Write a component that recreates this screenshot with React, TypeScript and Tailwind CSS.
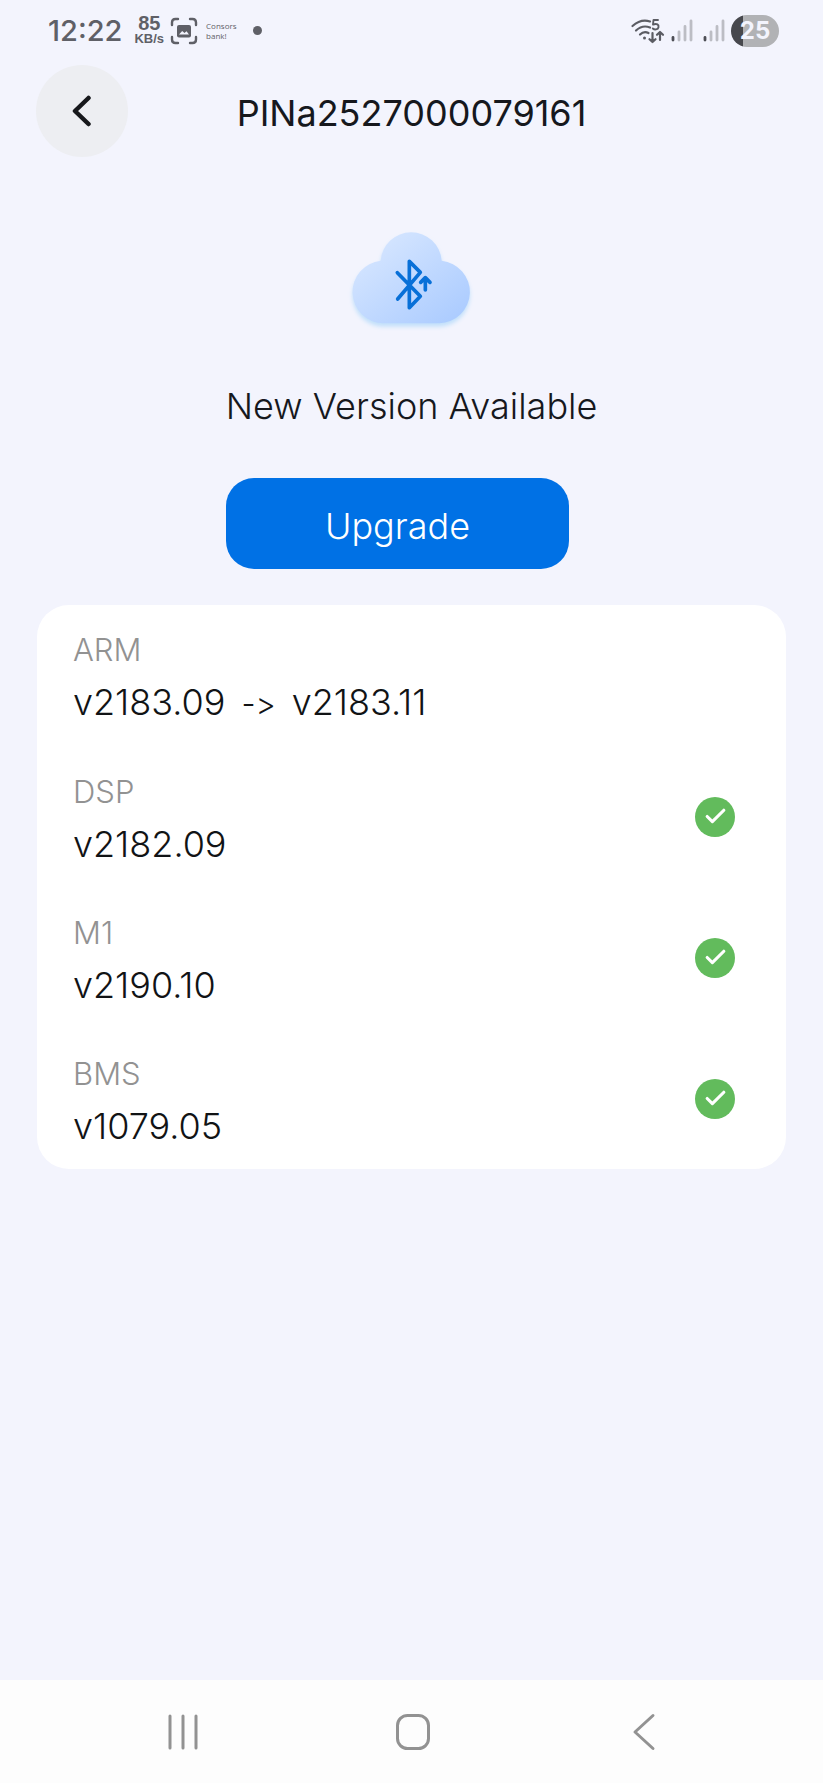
import { Check } from "lucide-react";

type Module = {
  name: string;
  version: string;
  next?: string;
};

const modules: Module[] = [
  { name: "ARM", version: "v2183.09", next: "v2183.11" },
  { name: "DSP", version: "v2182.09" },
  { name: "M1", version: "v2190.10" },
  { name: "BMS", version: "v1079.05" },
];

function SignalBars() {
  return (
    <svg width="22" height="23" viewBox="0 0 22 23" strokeWidth="2.800" strokeLinecap="round" aria-hidden="true">
      <path d="M2 18.5v2.5" stroke="#4d4e55" />
      <path d="M8 13v8M14 7.500v13.500M20 2v19" stroke="#bcbdc4" />
    </svg>
  );
}

function WifiIcon() {
  return (
    <svg width="34" height="26" viewBox="0 0 34 26" fill="none" stroke="#5b5c63" strokeWidth="2.200" strokeLinecap="round" strokeLinejoin="round" aria-hidden="true">
      <path d="M1.500 8Q10 .5 19 3.500" />
      <path d="M5 12.500Q11.500 6.500 19 9.500" />
      <path d="M9 16.500Q13 12.500 17.500 15" />
      <circle cx="13.500" cy="20" r="1.500" fill="#5b5c63" stroke="none" />
      <path d="M27 2h-4.500l-.5 4.500c4-1.500 6 .3 5.500 2.700-.5 2.600-4 2.800-5.700 1.300" strokeWidth="1.900" />
      <path d="M21.500 15v9M18.500 21.200l3 2.800 3-2.800M29 22v-8M26 16.800l3-2.800 3 2.800" />
    </svg>
  );
}

function ScanIcon() {
  return (
    <svg width="28" height="28" viewBox="0 0 28 28" fill="none" aria-hidden="true">
      <path
        d="M2 8V5.500Q2 2 5.500 2H8M20 2h2.500Q26 2 26 5.500V8M26 20v2.500q0 3.500-3.500 3.500H20M8 26H5.500Q2 26 2 22.500V20"
        stroke="#5f6067"
        strokeWidth="2.400"
        strokeLinecap="round"
      />
      <rect x="7" y="8" width="14" height="12.500" rx="2" fill="#5f6067" />
      <path d="M9 17.500l3.200-3.500 2.300 2 2-1.800 2.500 3.300z" fill="#f3f4fd" />
    </svg>
  );
}

function StatusBar() {
  return (
    <div className="flex h-[65px] items-center justify-between pr-11 pb-1 pl-12 text-[#5f6067]">
      <div className="flex items-center">
        <span className="font-['Inter','Liberation_Sans',sans-serif] text-[29px] leading-8 font-medium">12:22</span>
        <div className="ml-3 flex flex-col items-center font-['Liberation_Sans',sans-serif] font-bold">
          <span className="text-[20px] leading-4">85</span>
          <span className="text-[13px] leading-4">KB/s</span>
        </div>
        <span className="ml-1.5">
          <ScanIcon />
        </span>
        <span className="ml-2 flex flex-col font-['Open_Sans',sans-serif] text-[8px] leading-[10px]">
          <span>Consors</span>
          <span>bank!</span>
        </span>
        <span className="ml-4 size-[9px] rounded-full bg-[#5f6067]" />
      </div>
      <div className="flex items-center gap-1.5">
        <WifiIcon />
        <SignalBars />
        <span className="ml-1">
          <SignalBars />
        </span>
        <span className="flex h-8 w-12 items-center justify-center rounded-full bg-linear-to-r from-[#47484d] from-25% to-[#b1b2b5] to-25% font-['Inter',sans-serif] text-[24px] font-bold text-[#f3f4fd]">
          25
        </span>
      </div>
    </div>
  );
}

function CloudIcon() {
  return (
    <svg width="180" height="140" viewBox="6 0 540 420" fill="none" aria-hidden="true">
      <defs>
        <linearGradient id="cloud" x1="170" y1="80" x2="380" y2="350" gradientUnits="userSpaceOnUse">
          <stop stopColor="#d6e6ff" />
          <stop offset="1" stopColor="#acccff" />
        </linearGradient>
        <filter id="shadow" x="60" y="40" width="430" height="350" filterUnits="userSpaceOnUse">
          <feDropShadow dx="0" dy="10" stdDeviation="7" floodColor="#b4dafa" floodOpacity="0.8" />
        </filter>
      </defs>
      <path
        d="M190 340a94 94 0 0 1-8-187.500a91.700 91.700 0 0 1 183 0A94 94 0 0 1 358 340z"
        fill="url(#cloud)"
        filter="url(#shadow)"
      />
      <g stroke="#0870d8" strokeWidth="11" strokeLinecap="round" strokeLinejoin="round">
        <path d="M232 188L301 259L268 293V154L301 187L233 267" />
        <path d="M316 240V203M302 217l14-14 14 14" />
      </g>
    </svg>
  );
}

function ModuleRow({ name, version, next }: Module) {
  return (
    <li className="flex h-[141px] items-center justify-between pr-[51px] pl-9">
      <div className="pt-1.5">
        <p className="text-[31px] leading-[48px] font-light text-[#929292]">{name}</p>
        <p className="flex items-baseline gap-4 text-[36px] leading-[56px] font-light text-[#111315]">
          <span>{version}</span>
          {next && (
            <>
              <span className="text-[31px] [font-feature-settings:'calt'_0]">-&gt;</span>
              <span>{next}</span>
            </>
          )}
        </p>
      </div>
      {!next && (
        <span role="img" aria-label="Up to date" className="flex size-10 items-center justify-center rounded-full bg-[#62bb5c] text-white">
          <Check size={25} strokeWidth={3} />
        </span>
      )}
    </li>
  );
}

export default function App() {
  return (
    <div className="flex min-h-screen flex-col bg-[#f3f4fd] font-['Inter','Liberation_Sans',sans-serif]">
      <StatusBar />
      <header className="grid grid-cols-[92px_1fr_92px] items-center px-9">
        <button type="button" aria-label="Back" className="flex size-[92px] items-center justify-center rounded-full bg-[#edeef2] text-[#17181c]">
          <svg width="20" height="32" viewBox="0 0 20 32" fill="none" stroke="currentColor" strokeWidth="4.500" strokeLinecap="round" strokeLinejoin="round">
            <path d="M16.500 3L3 16l13.500 13" />
          </svg>
        </button>
        <h1 className="pt-1 text-center text-[36px] leading-[56px] text-[#16181d]">PINa2527000079161</h1>
      </header>

      <main className="flex grow flex-col px-[37px] pt-[53px]">
        <div className="flex flex-col items-center">
          <CloudIcon />
          <p className="mt-7 text-[36px] leading-[56px] font-light text-[#16181d]">New Version Available</p>
          <button type="button" className="mt-11 mr-7 h-[91px] w-[343px] rounded-[28px] bg-[#0071e5] pt-1 text-[36px] font-light text-white">
            Upgrade
          </button>
        </div>
        <ul className="mt-9 rounded-[32px] bg-white">
          {modules.map((m) => (
            <ModuleRow key={m.name} {...m} />
          ))}
        </ul>
      </main>

      <nav className="grid h-[103px] grid-cols-3 items-center bg-[#fdfdfd] pr-16 pl-[68px] text-[#929292]">
        <button type="button" aria-label="Recent apps" className="flex h-full items-center justify-center">
          <svg width="32" height="38" viewBox="0 0 32 38" stroke="currentColor" strokeWidth="3" strokeLinecap="round">
            <path d="M3 3v32M16 3v32M29 3v32" />
          </svg>
        </button>
        <button type="button" aria-label="Home" className="flex h-full items-center justify-center">
          <svg width="36" height="38" viewBox="0 0 36 38" fill="none" stroke="currentColor" strokeWidth="3">
            <rect x="2.500" y="2.500" width="31" height="33" rx="10" />
          </svg>
        </button>
        <button type="button" aria-label="Back" className="flex h-full items-center justify-center">
          <svg width="24" height="38" viewBox="0 0 24 38" fill="none" stroke="currentColor" strokeWidth="3" strokeLinecap="round" strokeLinejoin="round">
            <path d="M21 2.500L3 19l18 16.500" />
          </svg>
        </button>
      </nav>
    </div>
  );
}
